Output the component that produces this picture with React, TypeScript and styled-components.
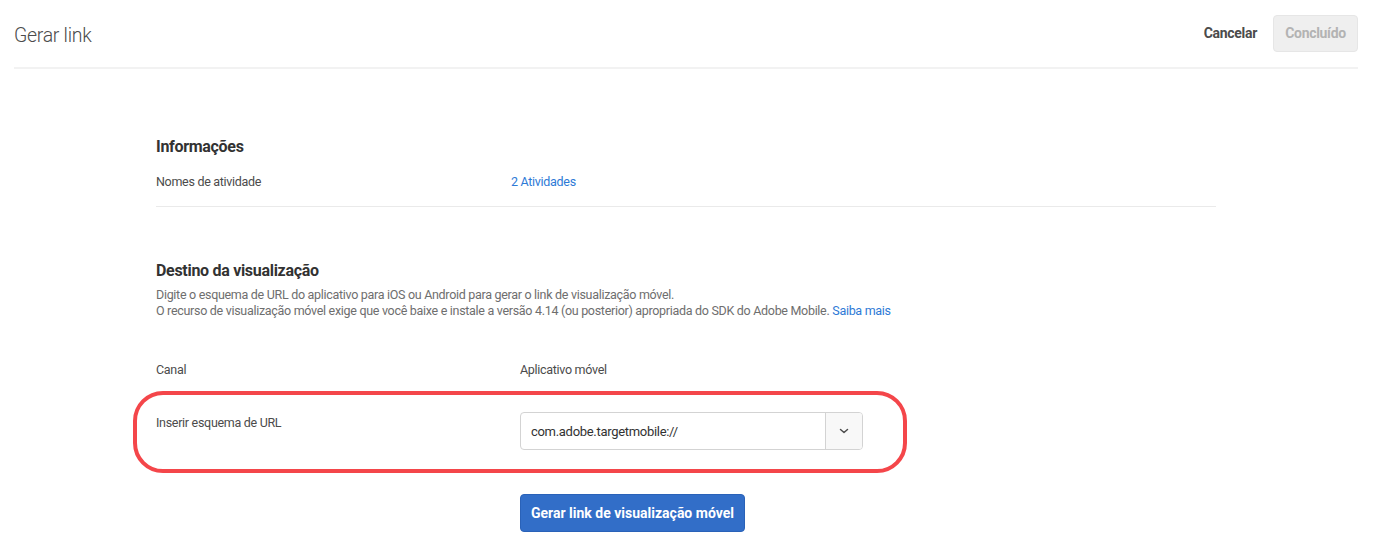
import React from "react";
import styled, { createGlobalStyle } from "styled-components";

const Global = createGlobalStyle`
  html, body { margin: 0; padding: 0; background: #ffffff; }
  body { font-family: Roboto, "Liberation Sans", sans-serif; color: #4b4b4b; letter-spacing: -0.3px; }
  * { box-sizing: border-box; }
`;

const Page = styled.div`
  width: 1374px;
  min-height: 551px;
  background: #fff;
`;

const Header = styled.header`
  margin: 0 16px 0 14px;
  height: 69px;
  display: flex;
  align-items: center;
  justify-content: space-between;
  border-bottom: 2px solid #f2f2f2;
  padding-bottom: 1px;
`;

const Title = styled.h1`
  margin: 5px 0 0;
  font-weight: 300;
  font-size: 19.5px;
  color: #4b4b4b;
`;

const Actions = styled.div`
  display: flex;
  align-items: center;
  gap: 16px;
`;

const TextButton = styled.button`
  border: none;
  background: none;
  font-family: inherit;
  letter-spacing: -0.3px;
  font-weight: 700;
  font-size: 14px;
  color: #4b4b4b;
  padding: 0;
`;

const DisabledButton = styled.button`
  width: 85px;
  height: 37px;
  border: 1px solid #e6e6e6;
  border-radius: 4px;
  background: #efefef;
  color: #b3b3b3;
  font-family: inherit;
  letter-spacing: -0.3px;
  font-weight: 700;
  font-size: 14px;
`;

const Content = styled.main`
  margin-left: 156px;
  width: 1060px;
  padding-top: 68px;
`;

const SectionTitle = styled.h2`
  margin: 0;
  font-size: 16px;
  font-weight: 700;
  color: #323232;
  line-height: 20px;
`;

const InfoRow = styled.div`
  display: grid;
  grid-template-columns: 355px 1fr;
  font-size: 12.5px;
  line-height: 16px;
  padding: 17px 0 16px;
  border-bottom: 1px solid #eaeaea;
`;

const Label = styled.span`
  color: #4b4b4b;
`;

const Link = styled.a`
  color: #2d7ad6;
  text-decoration: none;
`;

const Section = styled.section<{ $top: number }>`
  margin-top: ${(p) => p.$top}px;
`;

const Description = styled.p`
  margin: 6px 0 0;
  font-size: 12.5px;
  line-height: 16px;
  color: #6e6e6e;
`;

const ColumnHeads = styled.div`
  display: grid;
  grid-template-columns: 364px 1fr;
  font-size: 12.5px;
  line-height: 16px;
  color: #4b4b4b;
  margin-top: 43px;
`;

const Highlight = styled.div`
  margin: 13px 0 0 -23px;
  width: 774px;
  height: 82px;
  border: 4px solid #f4464a;
  border-radius: 30px;
  padding: 17px 0 0 19px;
  display: grid;
  grid-template-columns: 364px 343px;
  align-items: start;
`;

const RowLabel = styled.span`
  font-size: 12.5px;
  line-height: 16px;
  color: #4b4b4b;
  padding-top: 3px;
`;

const Select = styled.div`
  display: flex;
  height: 38px;
  border: 1px solid #d3d3d3;
  border-radius: 4px;
  overflow: hidden;
  background: #fff;
`;

const SelectValue = styled.div`
  flex: 1;
  display: flex;
  align-items: center;
  padding-left: 10px;
  font-size: 13px;
  color: #323232;
`;

const SelectToggle = styled.div`
  width: 37px;
  border-left: 1px solid #d3d3d3;
  background: #f8f8f8;
  display: flex;
  align-items: center;
  justify-content: center;
`;

const PrimaryButton = styled.button`
  margin: 21px 0 0 364px;
  height: 38px;
  padding: 0 10px;
  border: 1px solid #2a62b8;
  border-radius: 4px;
  background: #326ec8;
  color: #fff;
  font-family: inherit;
  letter-spacing: 0px;
  font-weight: 700;
  font-size: 14px;
`;

export default function App() {
  return (
    <Page>
      <Global />
      <Header>
        <Title>Gerar link</Title>
        <Actions>
          <TextButton>Cancelar</TextButton>
          <DisabledButton disabled>Concluído</DisabledButton>
        </Actions>
      </Header>
      <Content>
        <SectionTitle>Informações</SectionTitle>
        <InfoRow>
          <Label>Nomes de atividade</Label>
          <Link href="#">2 Atividades</Link>
        </InfoRow>
        <Section $top={54}>
          <SectionTitle>Destino da visualização</SectionTitle>
          <Description>
            Digite o esquema de URL do aplicativo para iOS ou Android para gerar o link de visualização móvel.
            <br />
            O recurso de visualização móvel exige que você baixe e instale a versão 4.14 (ou posterior) apropriada do SDK do Adobe Mobile.{" "}
            <Link href="#">Saiba mais</Link>
          </Description>
        </Section>
        <ColumnHeads>
          <span>Canal</span>
          <span>Aplicativo móvel</span>
        </ColumnHeads>
        <Highlight>
          <RowLabel>Inserir esquema de URL</RowLabel>
          <Select>
            <SelectValue>com.adobe.targetmobile://</SelectValue>
            <SelectToggle>
              <svg width="10" height="6" viewBox="0 0 10 6">
                <path d="M1.5 1.5 L5 4.5 L8.5 1.5" fill="none" stroke="#4b4b4b" strokeWidth="1.5" strokeLinecap="round" strokeLinejoin="round" />
              </svg>
            </SelectToggle>
          </Select>
        </Highlight>
        <PrimaryButton>Gerar link de visualização móvel</PrimaryButton>
      </Content>
    </Page>
  );
}
